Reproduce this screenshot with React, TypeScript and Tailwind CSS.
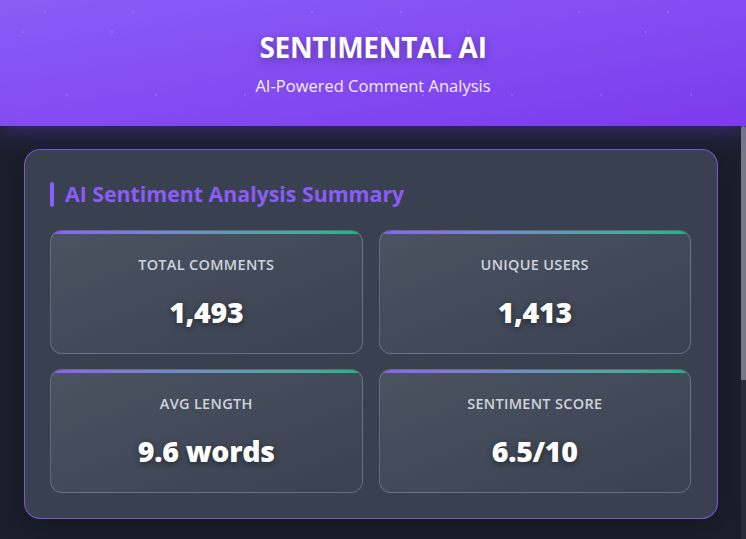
const stats = [
  { label: "Total Comments", value: "1,493" },
  { label: "Unique Users", value: "1,413" },
  { label: "Avg Length", value: "9.6 words" },
  { label: "Sentiment Score", value: "6.5/10" },
];

const dots = [
  [44, 11], [132, 11], [311, 11], [400, 11], [578, 11], [667, 11],
  [22, 31], [111, 31], [378, 31], [467, 31], [645, 31],
  [66, 94], [155, 94], [244, 94], [422, 94], [511, 94], [600, 94], [690, 94],
];

export default function App() {
  return (
    <div
      className="flex h-screen flex-col bg-[#1a202c] text-white"
      style={{ fontFamily: '"Open Sans", "Noto Sans", sans-serif' }}
    >
      {/* Header */}
      <header className="relative z-10 h-[126px] shrink-0 bg-gradient-to-br from-[#8b5cf6] to-[#7c3aed] shadow-[0_6px_24px_rgba(124,58,237,0.35)]">
        {dots.map(([x, y]) => (
          <span
            key={`${x}-${y}`}
            className="absolute h-[2px] w-[2px] rounded-full bg-white/20"
            style={{ left: x, top: y }}
          />
        ))}
        <div className="relative flex flex-col items-center pt-[29px]">
          <h1 className="text-[28px] font-bold leading-[36px] tracking-[-0.3px] [text-shadow:0_3px_8px_rgba(0,0,0,0.3)]">
            SENTIMENTAL AI
          </h1>
          <p className="mt-[10px] text-[16.5px] leading-[22px] text-white/90">AI-Powered Comment Analysis</p>
        </div>
      </header>

      {/* Content */}
      <main className="flex min-h-0 flex-1">
        <div className="flex-1 overflow-hidden px-[24px] pt-[23px]">
          <section className="w-[694px] rounded-[16px] border border-[#8b5cf6]/80 bg-[#394150] pb-[25px] pl-[25px] pr-[26px] pt-[30px] shadow-[0_8px_30px_rgba(0,0,0,0.3)]">
            <div className="mb-[22px] flex items-center gap-[11px]">
              <span className="h-[25px] w-[4px] rounded-full bg-[#8b5cf6]" />
              <h2 className="text-[21.3px] font-bold leading-[28px] text-[#8b5cf6]">
                AI Sentiment Analysis Summary
              </h2>
            </div>
            <div className="grid grid-cols-2 gap-x-[16px] gap-y-[15px]">
              {stats.map((s) => (
                <div
                  key={s.label}
                  className="relative h-[124px] overflow-hidden rounded-[12px] border border-white/20 bg-gradient-to-br from-[#4b5361] to-[#3a4252]"
                >
                  <div className="absolute inset-x-0 top-0 h-[3px] bg-gradient-to-r from-[#8b5cf6] to-[#10b981]" />
                  <div className="flex flex-col items-center pt-[24px]">
                    <div className="text-[14.5px] font-semibold uppercase leading-[20px] tracking-[0.3px] text-[#cfd4dc]">
                      {s.label}
                    </div>
                    <div className="mt-[18px] text-[28.5px] font-extrabold leading-[38px] tracking-[-0.3px] text-white [text-shadow:0_2px_6px_rgba(0,0,0,0.45)]">
                      {s.value}
                    </div>
                  </div>
                </div>
              ))}
            </div>
          </section>
        </div>
        {/* scrollbar */}
        <div className="w-[5px] shrink-0 bg-[#262d3a]">
          <div className="h-[254px] rounded-t-[3px] bg-[#737a86]" />
        </div>
      </main>
    </div>
  );
}
